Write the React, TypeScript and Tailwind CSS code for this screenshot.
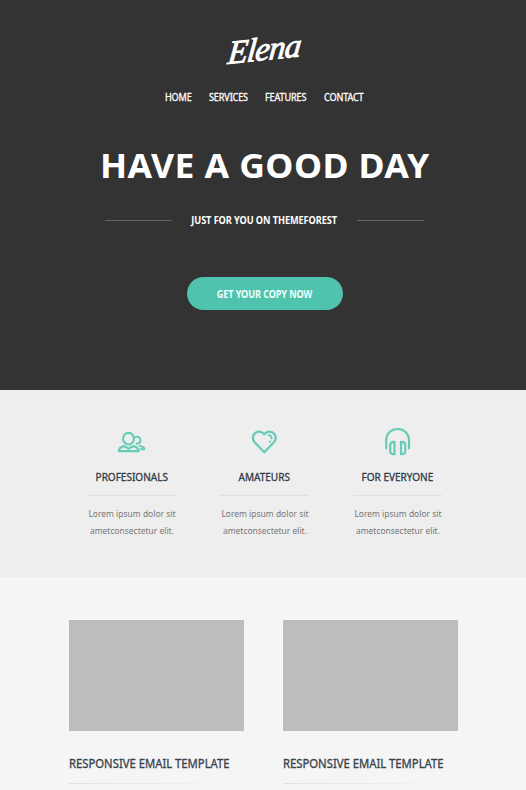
const navItems = [
  { label: 'HOME', width: 'w-[44px]' },
  { label: 'SERVICES', width: 'w-[56px]' },
  { label: 'FEATURES', width: 'w-[59.5px]' },
  { label: 'CONTACT', width: 'w-[41px]' },
];

function PeopleIcon() {
  return (
    <svg width="30" height="30" viewBox="0 0 30 30" fill="none" stroke="#67ccb7" strokeWidth="2.2" strokeLinecap="round" strokeLinejoin="round">
      <ellipse cx="11.500" cy="11.700" rx="5.400" ry="5.800" />
      <path d="M18.300 10.200a3.500 3.500 0 1 1 1.200 6.500" strokeWidth="2" />
      <path d="M7.300 19.200c-3.300.6-5.300 2.100-5.600 5h20c-.3-2.900-2.300-4.400-5.600-5l-4.400 2.400z" />
      <path d="M22.800 18.900c3 .4 4.400 1.600 4.600 3.300h-3.600" strokeWidth="2" />
    </svg>
  );
}

function HeartIcon() {
  return (
    <svg width="30" height="30" viewBox="0 0 30 30" fill="none" stroke="#67ccb7" strokeWidth="2.3" strokeLinecap="round" strokeLinejoin="round">
      <path d="M14.300 7.300C11.300 3.700 6.500 3.900 4.100 7.200c-1.900 3-1.100 6.400 1.200 8.800L14.300 25.300l9-9.300c2.300-2.400 3.100-5.800 1.200-8.800C22.100 3.900 17.300 3.700 14.300 7.300Z" />
      <path d="M18.500 8.100c2.300.2 3.300 1.500 3.100 3.600" strokeWidth="1.800" />
      <path d="M20.300 14.300l-.6.6" strokeWidth="1.800" />
    </svg>
  );
}

function HeadphonesIcon() {
  return (
    <svg width="30" height="30" viewBox="0 0 30 30" fill="none" stroke="#67ccb7" strokeWidth="2.2" strokeLinecap="round" strokeLinejoin="round">
      <path d="M3.200 21.300v-7.800C3.200 6.500 8.200 2 14.600 2s11.400 4.500 11.400 11.500v7.800" />
      <path d="M11.500 14.800v12.400h-.8c-2.200 0-3.500-1.500-3.500-3.700v-5c0-2.200 1.300-3.700 3.500-3.700z" />
      <path d="M18 14.800v12.400h.8c2.200 0 3.500-1.500 3.500-3.700v-5c0-2.200-1.300-3.700-3.500-3.700z" />
    </svg>
  );
}

const features = [
  { title: 'PROFESIONALS', Icon: PeopleIcon },
  { title: 'AMATEURS', Icon: HeartIcon },
  { title: 'FOR EVERYONE', Icon: HeadphonesIcon },
];

export default function App() {
  return (
    <div className="h-[790px] w-[526px] overflow-hidden bg-[#f5f5f5] font-['Noto_Sans',sans-serif]">
      <header className="flex h-[390px] flex-col items-center bg-[#333333] pl-[3px] text-white">
        <div className="mt-[29px] flex h-10 items-center justify-center">
          <span className="-rotate-6 -skew-x-12 font-['Liberation_Serif',serif] text-[33px] italic leading-10 tracking-[-0.8px] [-webkit-text-stroke:0.9px_white]">Elena</span>
        </div>
        <nav className="mt-[19px] flex h-[18px] w-[200px] text-[10px] leading-[18px] tracking-[-0.15px] [-webkit-text-stroke:0.3px_white]">
          {navItems.map((item) => (
            <a key={item.label} className={`${item.width} shrink-0 origin-left scale-x-[0.91] whitespace-nowrap`}>{item.label}</a>
          ))}
        </nav>
        <h1 className="mt-[35px] scale-x-[1.045] whitespace-nowrap text-[34px] font-bold leading-[48px] tracking-[0.4px]">HAVE A GOOD DAY</h1>
        <div className="mt-[21px] flex h-5 w-[319px] items-center justify-between">
          <span className="h-px w-[67px] bg-[#666666]" />
          <span className="-mx-4 scale-x-[0.92] whitespace-nowrap text-[10px] font-bold leading-5 tracking-[-0.1px]">JUST FOR YOU ON THEMEFOREST</span>
          <span className="h-px w-[67px] bg-[#666666]" />
        </div>
        <button className="mt-[47px] flex h-[33px] w-[156px] items-center justify-center rounded-full bg-[#50c3ae] text-[#f2fffb]">
          <span className="scale-x-[0.91] whitespace-nowrap text-[10px] font-bold leading-5 tracking-[-0.1px]">GET YOUR COPY NOW</span>
        </button>
      </header>
      <section className="flex h-[187px] gap-[44px] bg-[#eeeeee] pl-[87px] pt-[37px]">
        {features.map(({ title, Icon }) => (
          <article key={title} className="flex w-[89px] flex-col items-center text-center">
            <Icon />
            <h2 className="mt-[10px] scale-x-[0.91] whitespace-nowrap text-[11px] leading-5 text-[#2e3a47] [-webkit-text-stroke:0.3px_#2e3a47]">{title}</h2>
            <div className="mt-[8px] h-px w-full bg-[#dfdfdf]" />
            <p className="mt-[9px] scale-x-[0.89] whitespace-nowrap text-[9.500px] leading-[17px] text-[#777777]">
              Lorem ipsum dolor sit<br />ametconsectetur elit.
            </p>
          </article>
        ))}
      </section>
      <section className="flex gap-[39px] pl-[69px] pt-[43px]">
        {[0, 1].map((card) => (
          <article key={card} className="w-[175px]">
            <div className="h-[111px] bg-[#bdbdbd]" />
            <h2 className="mt-[23px] origin-left scale-x-[0.94] whitespace-nowrap text-[12px] leading-5 text-[#36424c] [-webkit-text-stroke:0.3px_#36424c]">RESPONSIVE EMAIL TEMPLATE</h2>
            <div className="mt-[9px] h-px bg-linear-to-r from-[#e2e2e2] to-[#f5f5f5]" />
          </article>
        ))}
      </section>
    </div>
  );
}
